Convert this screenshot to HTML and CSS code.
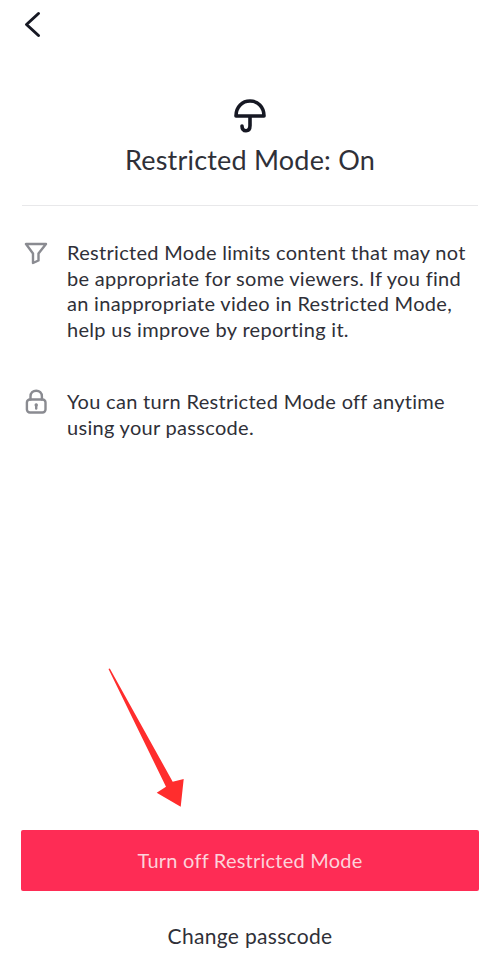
FILE: index.html
```html
<!DOCTYPE html>
<html lang="en">
<head>
<meta charset="utf-8">
<title>Restricted Mode</title>
<link rel="stylesheet" href="styles.css">
</head>
<body>
<div class="page">
  <header class="nav">
    <svg class="back" width="18" height="28" viewBox="0 0 18 28"><path d="M14.5 2.5 L2.5 13.5 L14.5 24.5" /></svg>
  </header>
  <section class="hero">
    <svg class="umbrella" width="34" height="36" viewBox="0 0 34 36"><path d="M3 18 C3 8.5 9.5 3 17 3 C24.5 3 31 8.5 31 18 Z M17 18 V27.5 C17 31 15.5 32.7 13 32.7 C10.5 32.7 9 31 9 28" /></svg>
    <h1 class="title">Restricted Mode: On</h1>
  </section>
  <section class="info">
    <div class="row">
      <svg class="ico" width="28" height="28" viewBox="0 0 28 28"><path d="M4 4 H24 L16.5 13.5 V20.5 L11 23 V13.5 Z" /></svg>
      <p class="text">Restricted Mode limits content that may not be appropriate for some viewers. If you find an inappropriate video in Restricted Mode, help us improve by reporting it.</p>
    </div>
    <div class="row">
      <svg class="ico" width="28" height="28" viewBox="0 0 28 28"><rect x="4.9" y="10.5" width="18.6" height="13" rx="3"/><path d="M8.5 10.5 V7.5 C8.5 3.8 11 1.7 14.2 1.7 C17.4 1.7 19.9 3.8 19.9 7.5 V10.5"/><circle class="dot" cx="14.2" cy="16" r="1.7"/><path class="stem" d="M14.2 16 V19.5"/></svg>
      <p class="text">You can turn Restricted Mode off anytime using your passcode.</p>
    </div>
  </section>
  <footer class="actions">
    <button class="primary">Turn off Restricted Mode</button>
    <div class="secondary">Change passcode</div>
  </footer>
  <svg class="arrow" width="100" height="150" viewBox="0 0 100 150"><path d="M18.5 9 L19.8 8.5 L82.7 121.7 L93.7 119 L90.7 146.7 L66.7 132.7 L76 126.7 Z"/></svg>
</div>
</body>
</html>
```
FILE: styles.css
```css
html, body { margin: 0; padding: 0; background: #fff; }
.page {
  position: relative;
  width: 500px;
  height: 970px;
  overflow: hidden;
  display: flex;
  flex-direction: column;
  font-family: "Lato", "Liberation Sans", sans-serif;
  color: #2f3038;
}
.nav { height: 98px; padding: 11px 0 0 24px; box-sizing: border-box; }
.back { display: block; }
.back path { fill: none; stroke: #161823; stroke-width: 3; stroke-linecap: round; stroke-linejoin: round; }
.hero {
  display: flex;
  flex-direction: column;
  align-items: center;
  margin: 0 22px;
  height: 107px;
  border-bottom: 1px solid #e8e8ea;
}
.umbrella { display: block; }
.umbrella path { fill: none; stroke: #161823; stroke-width: 3.6; stroke-linecap: round; stroke-linejoin: round; }
.title { margin: 10px 0 0; font-size: 27px; line-height: 32px; font-weight: 400; letter-spacing: 0.2px; }
.info { display: flex; flex-direction: column; gap: 46px; padding: 34px 22px 0; }
.row { display: flex; gap: 17px; align-items: flex-start; }
.ico { flex: none; display: block; }
.ico path, .ico rect { fill: none; stroke: #8a8b91; stroke-width: 2.4; stroke-linejoin: round; stroke-linecap: round; }
.ico .dot { fill: #8a8b91; }
.text { margin: 0; font-size: 20px; line-height: 25.7px; width: 402px; letter-spacing: 0.3px; }
.actions { margin-top: auto; display: flex; flex-direction: column; align-items: center; padding: 0 21px 19px; }
.primary {
  width: 458px;
  height: 61px;
  border: 0;
  border-radius: 2px;
  padding: 0 0 2px;
  background: #fe2c55;
  color: #fcd3db;
  font-family: inherit;
  font-size: 20px;
  letter-spacing: 0.22px;
}
.secondary { margin-top: 30px; font-size: 21px; line-height: 30px; letter-spacing: 0.32px; }
.arrow { position: absolute; left: 90px; top: 660px; }
.arrow path { fill: #ff2d2d; }
```
